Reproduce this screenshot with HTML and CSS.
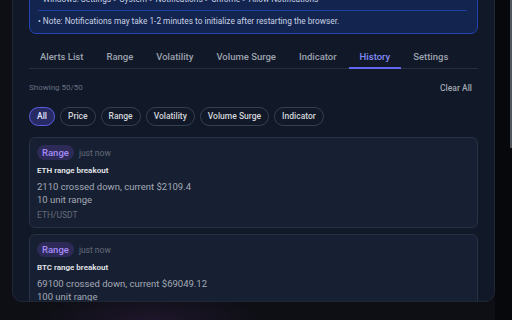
FILE: index.html
```html
<!DOCTYPE html>
<html lang="en">
<head>
    <meta charset="UTF-8">
    <meta name="viewport" content="width=device-width, initial-scale=1.0">
    <title>Price Alerts - History</title>
    <link rel="stylesheet" href="styles.css">
</head>
<body>
    <div class="page">
        <div class="panel">
            <div class="notice">
                <div class="notice-line">• Windows: Settings &gt; System &gt; Notifications &gt; Chrome &gt; Allow Notifications</div>
                <div class="notice-divider"></div>
                <div class="notice-line">• Note: Notifications may take 1-2 minutes to initialize after restarting the browser.</div>
            </div>

            <div class="tabs">
                <div class="tab">Alerts List</div>
                <div class="tab">Range</div>
                <div class="tab">Volatility</div>
                <div class="tab">Volume Surge</div>
                <div class="tab">Indicator</div>
                <div class="tab active">History</div>
                <div class="tab">Settings</div>
            </div>

            <div class="history-head">
                <span class="count">Showing 50/50</span>
                <button class="clear">Clear All</button>
            </div>

            <div class="filters">
                <button class="chip active">All</button>
                <button class="chip">Price</button>
                <button class="chip">Range</button>
                <button class="chip">Volatility</button>
                <button class="chip">Volume Surge</button>
                <button class="chip">Indicator</button>
            </div>

            <div class="history-list">
                <div class="card">
                    <div class="card-top">
                        <span class="badge">Range</span>
                        <span class="time">just now</span>
                    </div>
                    <div class="card-title">ETH range breakout</div>
                    <div class="card-desc">2110 crossed down, current $2109.4<br>10 unit range</div>
                    <div class="card-pair">ETH/USDT</div>
                </div>
                <div class="card">
                    <div class="card-top">
                        <span class="badge">Range</span>
                        <span class="time">just now</span>
                    </div>
                    <div class="card-title">BTC range breakout</div>
                    <div class="card-desc">69100 crossed down, current $69049.12<br>100 unit range</div>
                    <div class="card-pair">BTC/USDT</div>
                </div>
            </div>
        </div>
    </div>
    <div class="scroll-track">
        <div class="scroll-thumb"></div>
    </div>
</body>
</html>
```

FILE: styles.css
```css
body {
    margin: 0;
    height: 100vh;
    overflow: hidden;
    display: flex;
    font-family: Roboto, "Liberation Sans", sans-serif;
    background: radial-gradient(ellipse 120px 30px at 150px 320px, rgba(80, 40, 110, 0.25), transparent),
                #0d0f14;
}
.page {
    flex: 1;
    padding-left: 12px;
}
.panel {
    box-sizing: border-box;
    margin-top: -33px;
    height: 335px;
    padding: 16px;
    background-color: #111827;
    border: 1px solid #1f2735;
    border-radius: 10px;
    overflow: hidden;
}
.notice {
    padding: 8px 10px 6px 8px;
    background-color: #13244f;
    border: 1px solid #2444b4;
    border-radius: 7px;
    color: #c9d2e3;
    font-size: 8.3px;
}
.notice-line {
    line-height: 12px;
    white-space: nowrap;
}
.notice-divider {
    height: 1px;
    margin: 5px 0 4px;
    background-color: #1f3fa3;
}
.tabs {
    display: flex;
    gap: 1px;
    margin-top: 7px;
    border-bottom: 1px solid #262f3e;
}
.tab {
    padding: 9px 11px 4px;
    margin-bottom: -1px;
    line-height: 13px;
    font-size: 9.5px;
    font-weight: 500;
    white-space: nowrap;
    color: #9ca3af;
    border-bottom: 2px solid transparent;
}
.tab.active {
    color: #818cf8;
    border-bottom-color: #6366f1;
}
.history-head {
    display: flex;
    justify-content: space-between;
    align-items: center;
    margin-top: 13px;
    line-height: 12px;
}
.count {
    font-size: 8px;
    color: #667085;
}
.clear {
    padding: 0 6px;
    border: none;
    background: none;
    font-family: inherit;
    font-size: 8.5px;
    font-weight: 500;
    color: #a0a6b2;
}
.filters {
    display: flex;
    gap: 5px;
    margin-top: 13px;
}
.chip {
    padding: 2px 7px;
    line-height: 13px;
    font-family: inherit;
    font-size: 8.5px;
    font-weight: 500;
    white-space: nowrap;
    color: #d1d5db;
    background: none;
    border: 1px solid #354052;
    border-radius: 999px;
}
.chip.active {
    color: #e0e7ff;
    background-color: #272a63;
    border-color: #5b5ee8;
}
.history-list {
    display: flex;
    flex-direction: column;
    gap: 6px;
    margin-top: 11px;
}
.card {
    padding: 7px 7px 6px;
    background-color: #172032;
    border: 1px solid #283245;
    border-radius: 6px;
}
.card-top {
    display: flex;
    align-items: center;
    gap: 5px;
}
.badge {
    padding: 2px 5px;
    line-height: 11px;
    font-size: 9.5px;
    font-weight: 500;
    color: #a78bfa;
    background-color: #2d2a57;
    border-radius: 999px;
}
.time {
    font-size: 8.5px;
    color: #636b7a;
}
.card-title {
    margin-top: 5px;
    line-height: 12px;
    font-size: 8px;
    font-weight: 600;
    color: #e5e7eb;
}
.card-desc {
    margin-top: 3px;
    line-height: 13px;
    font-size: 9.5px;
    color: #a3a9b5;
}
.card-pair {
    margin-top: 4px;
    line-height: 11px;
    font-size: 8.5px;
    color: #636b7a;
}
.scroll-track {
    width: 17px;
    display: flex;
    justify-content: flex-end;
    background-color: #07080b;
}
.scroll-thumb {
    width: 2px;
    height: 148px;
    background-color: #53575e;
}
```
